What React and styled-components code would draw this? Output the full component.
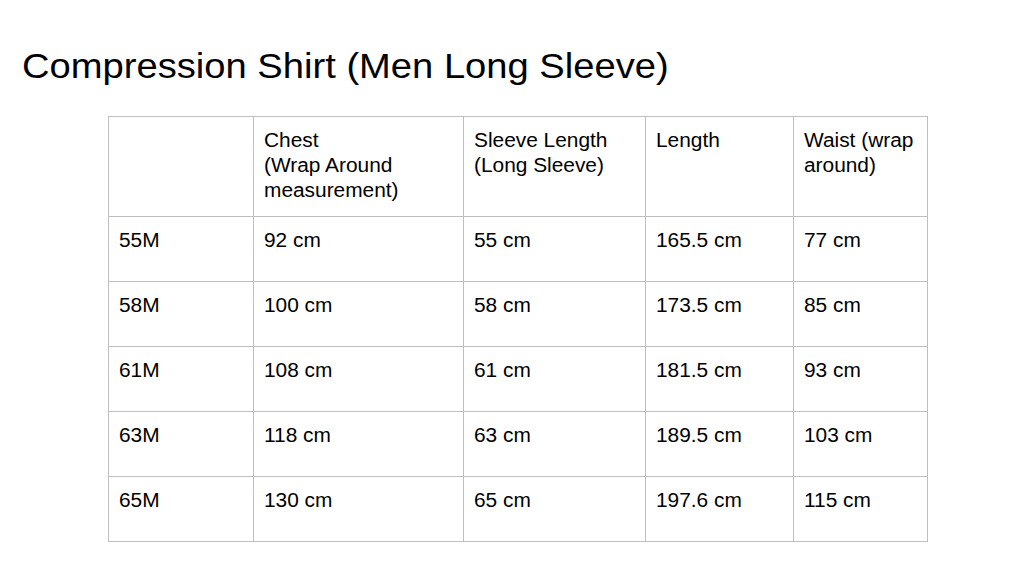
import React from "react";
import styled, { createGlobalStyle } from "styled-components";

const GlobalStyle = createGlobalStyle`
  html, body {
    margin: 0;
    padding: 0;
    background: #ffffff;
  }
  body {
    font-family: Arial, "Liberation Sans", sans-serif;
    color: #000000;
  }
`;

const Page = styled.div`
  width: 1024px;
  height: 564px;
  box-sizing: border-box;
  padding: 44px 0 0 22px;
  background: #ffffff;
  overflow: hidden;
`;

const Title = styled.h1`
  margin: 0;
  font-size: 35px;
  font-weight: normal;
  line-height: 44px;
  white-space: nowrap;
  transform: scaleX(1.09);
  transform-origin: left center;
`;

const SizeTable = styled.table`
  margin: 28px 0 0 86px;
  border-collapse: collapse;
  table-layout: fixed;
  width: 819px;
  font-size: 19.5px;
  line-height: 25px;
`;

const Cell = styled.td`
  border: 1px solid #bfbfbf;
  vertical-align: top;
  padding: 11px 8px 0 10px;
  height: ${(p) => (p.$head ? "100px" : "65px")};
  box-sizing: border-box;
`;

const CellText = styled.span`
  display: inline-block;
  white-space: pre-line;
  transform: scaleX(1.07);
  transform-origin: left top;
`;

const widths = [145, 210, 182, 148, 134];

const header = [
  "",
  "Chest\n(Wrap Around measurement)",
  "Sleeve Length (Long Sleeve)",
  "Length",
  "Waist (wrap around)",
];

const rows = [
  ["55M", "92 cm", "55 cm", "165.5 cm", "77 cm"],
  ["58M", "100 cm", "58 cm", "173.5 cm", "85 cm"],
  ["61M", "108 cm", "61 cm", "181.5 cm", "93 cm"],
  ["63M", "118 cm", "63 cm", "189.5 cm", "103 cm"],
  ["65M", "130 cm", "65 cm", "197.6 cm", "115 cm"],
];

export default function App() {
  return (
    <>
      <GlobalStyle />
      <Page>
        <Title>Compression Shirt (Men Long Sleeve)</Title>
        <SizeTable>
          <colgroup>
            {widths.map((w, i) => (
              <col key={i} style={{ width: w }} />
            ))}
          </colgroup>
          <tbody>
            <tr>
              {header.map((h, i) => (
                <Cell key={i} $head>
                  <CellText>{h}</CellText>
                </Cell>
              ))}
            </tr>
            {rows.map((r) => (
              <tr key={r[0]}>
                {r.map((c, i) => (
                  <Cell key={i}>
                    <CellText>{c}</CellText>
                  </Cell>
                ))}
              </tr>
            ))}
          </tbody>
        </SizeTable>
      </Page>
    </>
  );
}
